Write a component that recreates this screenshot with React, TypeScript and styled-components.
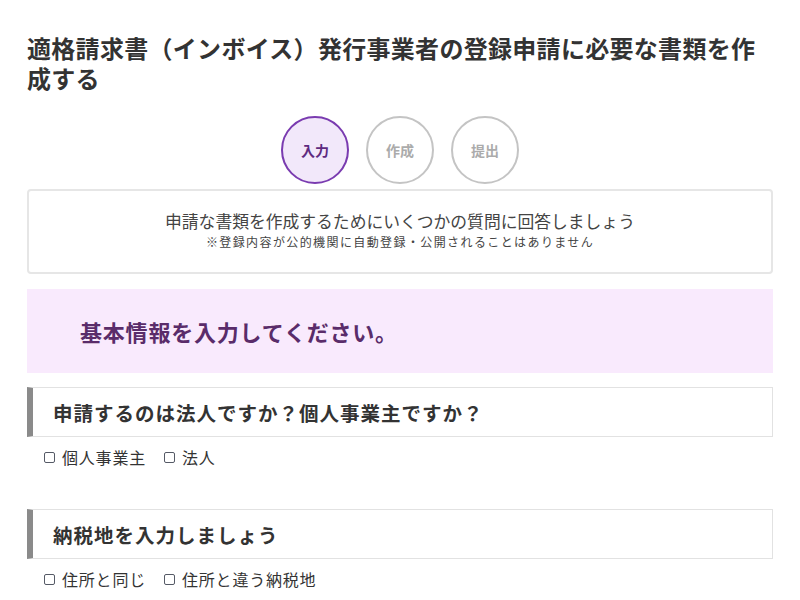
import React from "react";
import styled, { createGlobalStyle } from "styled-components";

const Global = createGlobalStyle`
  html, body { margin: 0; padding: 0; background: #fff; }
  body { font-family: "Noto Sans CJK JP", "Noto Sans", sans-serif; color: #333; }
`;

const Page = styled.div`
  padding: 33px 27px 0;
  width: 746px;
`;

const Title = styled.h1`
  margin: 0;
  font-size: 24px;
  line-height: 30px;
  font-weight: 700;
  color: #333;
  letter-spacing: 0.3px;
`;

const Steps = styled.div`
  display: flex;
  justify-content: center;
  gap: 17px;
  margin-top: 23px;
`;

const Step = styled.div<{ $active?: boolean }>`
  box-sizing: border-box;
  width: 68px;
  height: 68px;
  border-radius: 50%;
  border: 2px solid ${(p) => (p.$active ? "#7a3bb0" : "#c4c4c4")};
  background: ${(p) => (p.$active ? "#f2e8fa" : "#fff")};
  color: ${(p) => (p.$active ? "#5e2a80" : "#ababab")};
  font-size: 14px;
  font-weight: 700;
  display: flex;
  align-items: center;
  justify-content: center;
`;

const InfoBox = styled.div`
  margin-top: 5px;
  box-sizing: border-box;
  height: 85px;
  border: 2.5px solid #e6e6e6;
  border-radius: 4px;
  display: flex;
  flex-direction: column;
  align-items: center;
  padding-top: 18px;
`;

const InfoMain = styled.div`
  font-size: 16.8px;
  line-height: 24px;
  color: #444;
`;

const InfoNote = styled.div`
  font-size: 12px;
  letter-spacing: 1.4px;
  line-height: 18px;
  color: #444;
`;

const Banner = styled.div`
  margin-top: 15px;
  height: 84px;
  background: #f9eafd;
  display: flex;
  align-items: center;
  padding-left: 53px;
  font-size: 22px;
  letter-spacing: 0.8px;
  font-weight: 700;
  color: #5a2c6a;
`;

const Section = styled.section<{ $first?: boolean }>`
  margin-top: ${(p) => (p.$first ? "14px" : "40px")};
`;

const QHeader = styled.h2`
  margin: 0;
  box-sizing: border-box;
  height: 50px;
  border: 1px solid #e2e2e2;
  border-left: 6px solid #8a8a8a;
  display: flex;
  align-items: center;
  padding-left: 20px;
  font-size: 19.5px;
  font-weight: 700;
  color: #333;
  letter-spacing: 1px;
`;

const Options = styled.div`
  display: flex;
  gap: 18px;
  padding: 8px 0 0 17px;
  height: 24px;
  align-items: center;
`;

const Option = styled.label`
  display: flex;
  align-items: center;
  gap: 7px;
  font-size: 16px;
  color: #333;
  letter-spacing: 0.8px;
`;

const Box = styled.span`
  box-sizing: border-box;
  width: 11px;
  height: 11px;
  border: 1.5px solid #555a66;
  border-radius: 2px;
  background: #fff;
`;

const questions = [
  { q: "申請するのは法人ですか？個人事業主ですか？", opts: ["個人事業主", "法人"] },
  { q: "納税地を入力しましょう", opts: ["住所と同じ", "住所と違う納税地"] },
];

export default function App() {
  return (
    <>
      <Global />
      <Page>
        <Title>適格請求書（インボイス）発行事業者の登録申請に必要な書類を作成する</Title>
        <Steps>
          <Step $active>入力</Step>
          <Step>作成</Step>
          <Step>提出</Step>
        </Steps>
        <InfoBox>
          <InfoMain>申請な書類を作成するためにいくつかの質問に回答しましょう</InfoMain>
          <InfoNote>※登録内容が公的機関に自動登録・公開されることはありません</InfoNote>
        </InfoBox>
        <Banner>基本情報を入力してください。</Banner>
        {questions.map((item, i) => (
          <Section key={i} $first={i === 0}>
            <QHeader>{item.q}</QHeader>
            <Options>
              {item.opts.map((o) => (
                <Option key={o}>
                  <Box />
                  {o}
                </Option>
              ))}
            </Options>
          </Section>
        ))}
      </Page>
    </>
  );
}
